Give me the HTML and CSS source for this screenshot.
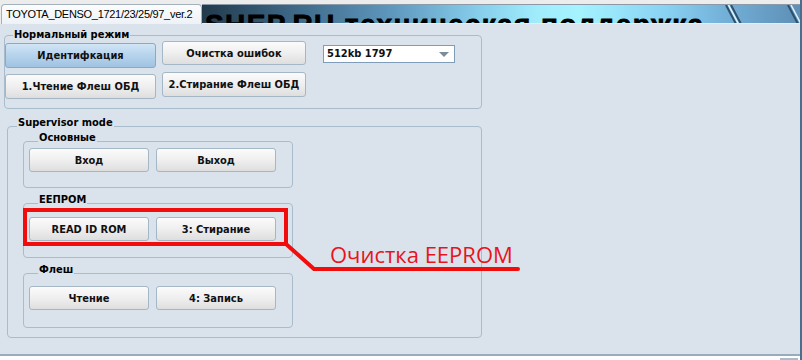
FILE: index.html
```html
<!DOCTYPE html>
<html lang="ru">
<head>
    <meta charset="UTF-8">
    <title>TOYOTA_DENSO_1721/23/25/97_ver.2</title>
    <link rel="stylesheet" href="styles.css">
</head>
<body>
    <div class="window">
        <div class="topbar">
            <div class="tab">TOYOTA_DENSO_1721/23/25/97_ver.2</div>
            <div class="banner">
                <span class="banner-text">SHEP.RU техническая поддержка</span>
                <svg class="banner-lines" width="80" height="19" viewBox="0 0 80 19">
                    <path d="M6 0 L16 19 M11 0 L21 19" stroke="#2f4f6a" stroke-width="2"/>
                    <path d="M8.5 0 L18.5 19" stroke="#dff4ff" stroke-width="1.5"/>
                    <path d="M68 0 L78 19" stroke="#2f4f6a" stroke-width="2"/>
                    <path d="M71 0 L81 19" stroke="#dff4ff" stroke-width="1.5"/>
                </svg>
            </div>
        </div>

        <div class="page">
            <!-- обычный режим -->
            <div class="group normal">
                <div class="group-title">Нормальный режим</div>
                <div class="normal-grid">
                    <button class="btn btn-active ident">Идентифкация</button>
                    <button class="btn clear-dtc">Очистка ошибок</button>
                    <div class="combo">512kb 1797<span class="arrow"></span></div>
                    <button class="btn read-flash">1.Чтение Флеш ОБД</button>
                    <button class="btn erase-flash">2.Стирание Флеш ОБД</button>
                </div>
            </div>

            <!-- supervisor -->
            <div class="group supervisor">
                <div class="group-title">Supervisor mode</div>

                <div class="group sub sub-main">
                    <div class="group-title">Основные</div>
                    <div class="btn-row">
                        <button class="btn">Вход</button>
                        <button class="btn">Выход</button>
                    </div>
                </div>

                <div class="group sub sub-eeprom">
                    <div class="group-title">EEПРОМ</div>
                    <div class="btn-row">
                        <button class="btn">READ ID ROM</button>
                        <button class="btn">3: Стирание</button>
                    </div>
                </div>

                <div class="group sub sub-flash">
                    <div class="group-title">Флеш</div>
                    <div class="btn-row">
                        <button class="btn">Чтение</button>
                        <button class="btn">4: Запись</button>
                    </div>
                </div>
            </div>
        </div>

        <div class="statusbar"><span class="grip"></span></div>

        <!-- пометка поверх окна -->
        <svg class="callout" width="802" height="360" viewBox="0 0 802 360">
            <rect x="25" y="210" width="261" height="34" fill="none" stroke="#f20d0d" stroke-width="4"/>
            <polyline points="286,244 314,269 518,269" fill="none" stroke="#f20d0d" stroke-width="4" stroke-linecap="round" stroke-linejoin="round"/>
            <text x="330" y="263" class="callout-text">Очистка EEPROM</text>
        </svg>
    </div>
</body>
</html>
```

FILE: styles.css
```css
/* окно программы */
body {
    margin: 0;
    background: #ffffff;
    font-family: "DejaVu Sans Condensed", "DejaVu Sans", Verdana, sans-serif;
    font-size: 11px;
    color: #111;
}

.window {
    position: relative;
    width: 802px;
    height: 360px;
    box-sizing: border-box;
    border-right: 2px solid #4b6e8e;
    overflow: hidden;
    background: #dae3ec;
}

/* вкладка и баннер */
.topbar {
    display: flex;
    height: 24px;
    padding-top: 4px;
    box-sizing: border-box;
    background: #ececec;
}

.tab {
    width: 201px;
    height: 20px;
    margin-left: 1px;
    padding-left: 4px;
    box-sizing: border-box;
    border: 1px solid #a3b1bd;
    border-bottom: none;
    border-radius: 4px 4px 0 0;
    background: linear-gradient(#fbfcfd, #eef2f6);
    font-family: "Liberation Sans", Arial, sans-serif;
    font-size: 11px;
    letter-spacing: -0.3px;
    line-height: 19px;
    white-space: nowrap;
    color: #000;
}

.banner {
    position: relative;
    flex: 1;
    height: 19px;
    overflow: hidden;
    border-top: 1px solid #8a9aa8;
    box-sizing: border-box;
    background: linear-gradient(90deg, #223a4c 0%, #3b6482 14%, #5f98be 32%, #86cdea 46%, #a0ecfb 56%, #a4f3ff 63%, #88d0f2 78%, #72aed6 88%, #5e8fb6 100%);
}

.banner-text {
    position: absolute;
    left: 3px;
    top: 0;
    font-family: "Liberation Sans", Arial, sans-serif;
    font-weight: bold;
    font-size: 28px;
    letter-spacing: 1.4px;
    -webkit-text-stroke: 0.8px #000;
    line-height: 40px;
    white-space: nowrap;
    color: #000;
}

.banner-lines {
    position: absolute;
    right: 0;
    top: 0;
}

/* основная область */
.page {
    height: 330px;
    padding-top: 11px;
    box-sizing: border-box;
}

.group {
    border: 1px solid #a9bccc;
    border-radius: 4px;
    box-sizing: border-box;
}

.group-title {
    width: fit-content;
    margin: -11px 0 0 9px;
    padding: 0 1px;
    background: #dae3ec;
    font-weight: bold;
    line-height: 14px;
    color: #000;
}

/* кнопки */
.btn {
    height: 24px;
    padding: 0;
    border: 1px solid #a5b6c5;
    border-radius: 3px;
    background: linear-gradient(#fbfbfb, #efefef 50%, #dedede);
    font-family: inherit;
    font-size: 11px;
    font-weight: bold;
    color: #111;
    white-space: nowrap;
}

.btn-active {
    border-color: #88aac6;
    background: linear-gradient(#d1e5f5, #b6d3ec 50%, #9fc3e2);
}

/* нормальный режим */
.normal {
    width: 478px;
    height: 74px;
    margin-left: 4px;
}

.normal .group-title {
    margin-top: -8px;
    margin-left: 8px;
}

.normal-grid {
    display: grid;
    grid-template-columns: 151px 144px 143px;
    column-gap: 6px;
    row-gap: 4px;
    margin-top: -1px;
}

.ident {
    height: 25px;
    margin-top: 2px;
}

.read-flash {
    height: 25px;
    margin-top: 2px;
}

.erase-flash {
    height: 25px;
}

.combo {
    position: relative;
    height: 18px;
    margin: 4px 0 0 11px;
    padding-left: 3px;
    box-sizing: border-box;
    border: 1px solid #7f9db9;
    background: #fff;
    font-weight: bold;
    line-height: 16px;
}

.arrow {
    position: absolute;
    right: 5px;
    top: 6px;
    border-left: 5px solid transparent;
    border-right: 5px solid transparent;
    border-top: 5px solid #7d8c9a;
}

/* supervisor */
.supervisor {
    width: 475px;
    height: 212px;
    margin: 17px 0 0 7px;
}

.sub {
    width: 270px;
    margin-left: 15px;
    padding: 0 0 0 5px;
}

.sub-main {
    height: 47px;
    margin-top: 11px;
}

.sub-eeprom,
.sub-flash {
    height: 55px;
    margin-top: 15px;
}

.btn-row {
    display: flex;
    gap: 7px;
    margin-top: 3px;
}

.btn-row .btn {
    width: 120px;
}

.sub-eeprom .btn-row {
    margin-top: 10px;
}

.sub-flash .btn-row {
    margin-top: 9px;
}

/* нижняя полоса */
.statusbar {
    position: relative;
    height: 6px;
    border-top: 2px solid #98acbc;
    background: #fdfdfd;
}

.grip {
    position: absolute;
    right: 2px;
    top: 2px;
    width: 18px;
    height: 4px;
    background: #a8bccc;
}

/* красная пометка */
.callout {
    position: absolute;
    left: 0;
    top: 0;
    pointer-events: none;
}

.callout-text {
    font-family: "Open Sans", sans-serif;
    font-size: 22px;
    fill: #e8141c;
}
```
